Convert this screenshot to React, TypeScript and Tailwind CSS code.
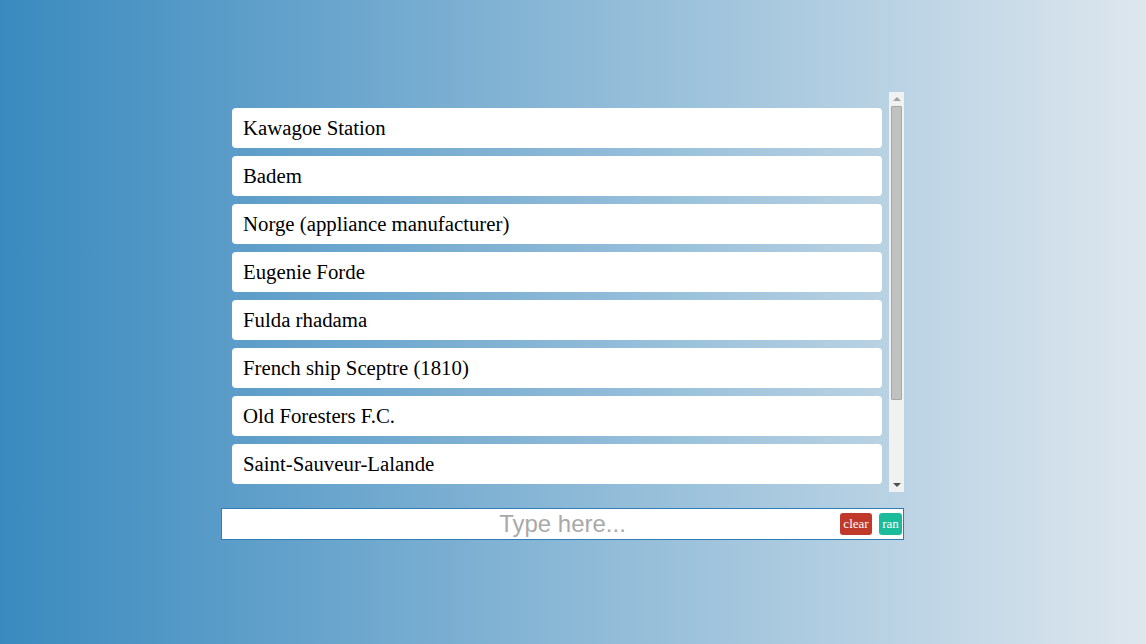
import React from "react";

const items = [
  "Kawagoe Station",
  "Badem",
  "Norge (appliance manufacturer)",
  "Eugenie Forde",
  "Fulda rhadama",
  "French ship Sceptre (1810)",
  "Old Foresters F.C.",
  "Saint-Sauveur-Lalande",
];

export default function App() {
  return (
    <div className="w-[1146px] h-[644px] bg-[linear-gradient(to_right,#3a8abf,#dee7ee)] pt-[92px] pl-[221px] overflow-hidden">
      <div className="w-[683px]">
        <div className="flex h-[400px] ml-[1px]">
          <div className="flex-1 flex flex-col gap-[8px] pt-[16px] pl-[10px] pr-[7px] overflow-hidden">
            {items.map((t) => (
              <div
                key={t}
                className="h-[40px] shrink-0 bg-white rounded-[4px] flex items-center pl-[11px] text-[20.8px] text-black font-['Liberation_Serif',serif]"
              >
                {t}
              </div>
            ))}
          </div>
          <div className="w-[15px] h-[400px] bg-[#f1f1f1] flex flex-col items-center">
            <div className="h-[14px] w-full flex items-center justify-center">
              <div className="w-0 h-0 border-l-[4px] border-r-[4px] border-b-[4px] border-l-transparent border-r-transparent border-b-[#a3a3a3]" />
            </div>
            <div className="w-[11px] h-[294px] bg-[#c1c1c1] border border-[#a8a8a8] rounded-[1px]" />
            <div className="flex-1" />
            <div className="h-[14px] w-full flex items-center justify-center">
              <div className="w-0 h-0 border-l-[4px] border-r-[4px] border-t-[4px] border-l-transparent border-r-transparent border-t-[#505050]" />
            </div>
          </div>
        </div>
        <div className="relative mt-[16px] h-[32px] bg-white border border-[#2f7db8] flex items-center justify-center">
          <div className="text-[24px] text-[#a9a9a9] font-['Liberation_Sans',sans-serif] leading-none">
            Type here...
          </div>
          <div className="absolute right-[1px] top-[4px] flex items-center gap-[7px]">
            <div className="h-[22px] w-[32px] bg-[#c0392b] rounded-[3px] text-white text-[13px] font-['Liberation_Serif',serif] flex items-center justify-center">
              clear
            </div>
            <div className="h-[22px] w-[23px] bg-[#1abc9c] rounded-[3px] text-white text-[13px] font-['Liberation_Serif',serif] flex items-center justify-center">
              ran
            </div>
          </div>
        </div>
      </div>
    </div>
  );
}
